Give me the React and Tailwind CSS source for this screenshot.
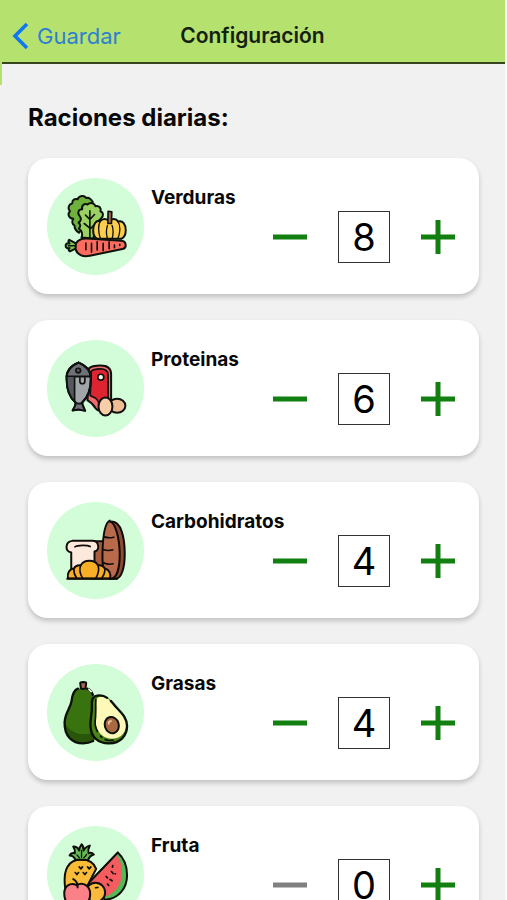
import { useState } from 'react';

const FONT = "font-[Inter,'Liberation_Sans',sans-serif]";

function Vegetables() {
  return (
    <svg viewBox="20 25 292 292" className="size-full" fill="none" stroke="#0c120c" strokeWidth="6" strokeLinecap="round" strokeLinejoin="round" aria-hidden="true">
      <path d="M116 190c-8-6-14-13-13-22-9-5-8-14-4-20-14-2-18-14-10-23-8-9-4-21 7-24-1-10 8-15 16-12 5-12 20-13 26-4 9-3 15 4 20 12l-20 24-14 60Z" fill="#6fb13d" />
      <path d="M124 204c5-13 1-20-8-27 6-6 5-12-1-18 8-4 9-12 3-20-8-10-3-20 8-20-3-11 6-19 16-14 9-9 22-4 24 5 11-3 18 6 15 15 10 4 9 14 3 20l-18 20-6 42Z" fill="#9bd062" />
      <path d="M149 124v82M149 150l-13-13M149 150l14-15M148 175l-16-13M150 178l15-14" strokeWidth="5" />
      <path d="M208 155c-8-9-22-9-28 0-14-5-21 12-21 28 0 12 5 22 13 25h72c8-4 13-14 13-26 0-17-9-31-23-26-6-10-20-10-26-1Z" fill="#fdcd4e" />
      <path d="M181 155c-8 10-7 33 0 53M233 155c9 12 8 35 0 53M202 168c-4 12-4 26 0 40M216 168c4 12 4 26 0 40" strokeWidth="4" />
      <path d="M203 162l1-37 11 2-1 35Z" fill="#a8694a" strokeWidth="5" />
      <path d="M107 222l-20-11c-4 4-3 8 1 11-7-2-12 1-12 7s5 9 12 7c-4 4-4 8 1 10l20-10Z" fill="#7fc650" />
      <path d="M84 229h20" strokeWidth="4" />
      <path d="M107 222c7-12 19-16 33-15l104 7c15 1 18 21 3 25l-98 20c-22 5-38-4-43-20Z" fill="#fb6b60" />
      <path d="M137 221v20M154 222v26M171 217v25M189 222v22M207 217v21M223 227v8M239 225v3" strokeWidth="5" />
    </svg>
  );
}

function Proteins() {
  return (
    <svg viewBox="20 21 292 292" className="size-full" fill="none" stroke="#101010" strokeWidth="6" strokeLinecap="round" strokeLinejoin="round" aria-hidden="true">
      <path d="M146 107c7-7 18-9 35-9 22 0 32 8 32 26v90c0 12-8 18-19 16-9 6-21 6-28-4-7-11-12-17-24-23Z" fill="#f36c6d" />
      <path d="M153 115c5-6 13-7 27-7 16 0 24 6 24 18v80c0 10-8 14-16 12-12-1-12-11-18-18-5-6-13-7-20-12Z" fill="#dc2530" strokeWidth="5" />
      <circle cx="182" cy="133" r="9" fill="#f4fff2" strokeWidth="5" />
      <path d="M115 89c-21 8-36 25-36 48 0 35 12 60 27 72 0 11-4 17-9 24l18-3 20 4c-4-8-8-15-9-25 17-15 26-42 26-71 0-25-16-40-37-49Z" fill="#a0a5aa" />
      <path d="M115 89c-21 8-36 25-36 42h73c-2-22-17-35-37-42Z" fill="#6e7276" />
      <path d="M79 134c1 34 10 58 24 70V134Z" fill="#55595d" stroke="none" />
      <path d="M103 132v76M119 135v11c0 9 15 9 15 0v-11M106 209c7 5 14 4 20 0" strokeWidth="5" />
      <path d="M106 213c0 7-4 13-9 20l18-3 20 4c-4-7-8-13-9-21Z" fill="#6e7276" strokeWidth="5" />
      <path d="M115 89c-21 8-36 25-36 48 0 35 12 60 27 72M126 209c17-15 26-42 26-71 0-25-16-40-37-49" />
      <circle cx="114" cy="113" r="7" fill="#55595d" strokeWidth="5" />
      <ellipse cx="231" cy="219" rx="25" ry="21" fill="#efbd95" />
      <ellipse cx="196" cy="221" rx="21" ry="27" fill="#f8cdaa" />
    </svg>
  );
}

function Carbs() {
  return (
    <svg viewBox="20 21 292 292" className="size-full" fill="none" stroke="#100c0a" strokeWidth="6" strokeLinecap="round" strokeLinejoin="round" aria-hidden="true">
      <path d="M98 139h92v112h-40Z" fill="#a85c40" />
      <path d="M215 80c28 0 39 48 39 97 0 43-10 72-25 75h-22Z" fill="#8d4b35" />
      <path d="M209 80c18 3 29 51 30 97 0 41-8 74-27 75-20-1-26-35-25-76 1-52 6-92 22-99Z" fill="#b86a4b" />
      <path d="M193 126c10 4 19 3 28 1M189 164c11 4 20 4 29 1M190 204c10 5 21 5 29 3" strokeWidth="5" />
      <path d="M96 138h60c22 0 24 29 7 32v78H93v-75c-20-3-19-32 3-35Z" fill="#fce9dc" />
      <path d="M104 156c8-6 38-6 46-1" strokeWidth="5" />
      <path d="M83 251c-3-16 5-29 18-30 5-9 12-10 20-9 11-18 41-19 53 0 9-2 16 2 20 9 12 2 19 14 16 30Z" fill="#f9ae28" />
      <path d="M121 212c-4 12 0 28 6 38M174 212c3 12-1 28-7 38M101 222c-1 10 3 21 8 28M194 222c1 10-4 21-9 28" strokeWidth="5" />
      <path d="M81 252h150" />
    </svg>
  );
}

function Avocado() {
  return (
    <svg viewBox="20 21 292 292" className="size-full" fill="none" stroke="#0b1009" strokeWidth="7" strokeLinecap="round" strokeLinejoin="round" aria-hidden="true">
      <path d="M113 95c-14 5-17 20-19 37-3 22-20 36-21 65-1 40 22 62 56 62 19 0 32-6 40-17l-10-128c-3-11-10-18-20-20Z" fill="#39730f" stroke="none" />
      <path d="M76 202c13 24 44 37 82 27l10 13c-14 18-56 22-76 2-10-10-16-24-16-42Z" fill="#285509" stroke="none" />
      <path d="M158 114c-3-10-9-16-17-19M113 95c-14 5-17 20-19 37-3 22-20 36-21 65-1 40 22 63 56 63 12 0 22-3 30-7" />
      <path d="M146 97l7 7" stroke="#effff0" strokeWidth="5" />
      <path d="M122 94l-2-15c0-5 18-5 18 0l-2 15c-3 3-11 3-14 0Z" fill="#a86654" strokeWidth="6" />
      <path d="M174 116c-15 1-20 11-19 28 2 25-6 41-4 66 2 32 24 51 57 50 32-1 53-22 53-52 0-32-25-45-41-68-11-16-23-24-46-24Z" fill="#4a8519" stroke="none" />
      <path d="M178 120c-11 2-11 14-10 31 1 26-6 39 1 60 8 23 26 36 49 35 24-1 40-18 40-41 0-25-22-39-37-60-12-17-24-27-43-25Z" fill="#fff9b9" stroke="none" />
      <path d="M201 123c-9-7-19-9-30-7-14 2-17 12-16 28 2 25-6 41-4 66 2 32 24 51 57 50 32-1 53-22 53-52 0-31-25-45-42-68l-7-8" />
      <path d="M167 128c-1 24 1 44-2 64-1 14 2 24 7 32M181 238l4 4M195 248c8 4 16 4 24 2" strokeWidth="5" />
      <ellipse cx="215" cy="205" rx="21" ry="25" transform="rotate(-18 215 205)" fill="#a86840" strokeWidth="6" />
      <path d="M213 193c-6 0-8 3-7 8" stroke="#f0cba8" strokeWidth="5" />
    </svg>
  );
}

function Fruit() {
  return (
    <svg viewBox="20 71 292 292" className="size-full" fill="none" stroke="#100e0a" strokeWidth="6" strokeLinecap="round" strokeLinejoin="round" aria-hidden="true">
      <path d="M233 151c20 18 28 45 28 68 0 42-28 72-66 74l-50-50Z" fill="#52b957" />
      <path d="M230 158c11 17 17 36 16 56-2 38-24 62-52 70l-45-41Z" fill="#f45c60" stroke="none" />
      <path d="M233 151l-88 92" />
      <path d="M218 190l-1 5M214 208l5 6M225 215l1 0M210 232l6 4M202 246l4 4M198 223l4 4" strokeWidth="5" />
      <path d="M75 260c-8-58 9-88 48-88 24 0 38 9 45 28l-24 46-19 80H88Z" fill="#f9bc38" />
      <path d="M105 172c-4-9-10-12-17-12 3-6 9-9 16-7 1-9-1-15-5-20 9 0 15 4 18 12 0-8 3-14 7-19 5 5 7 11 6 19 4-8 10-13 19-15-4 7-6 15-4 23 6-3 12-1 16 4-8 2-14 7-17 16Z" fill="#64b955" />
      <path d="M124 145v20M110 158l8 9M139 157l-8 10" strokeWidth="4" />
      <path d="M117 194l5 6 5-6M142 194l5 6 5-6M105 211l5 6 5-6M129 211l5 6 5-6" strokeWidth="5" />
      <circle cx="166" cy="271" r="29" fill="#fbb93e" />
      <path d="M166 257l7-1" strokeWidth="5" />
      <path d="M109 249c-19-10-38 3-37 27 1 26 17 42 37 34 22 9 41-9 41-34s-21-38-41-27Z" fill="#fb8189" />
      <path d="M112 256c1-12-4-20-13-25" />
    </svg>
  );
}

const GROUPS = [
  { id: 'verduras', name: 'Verduras', servings: 8, Icon: Vegetables },
  { id: 'proteinas', name: 'Proteinas', servings: 6, Icon: Proteins },
  { id: 'carbohidratos', name: 'Carbohidratos', servings: 4, Icon: Carbs },
  { id: 'grasas', name: 'Grasas', servings: 4, Icon: Avocado },
  { id: 'fruta', name: 'Fruta', servings: 0, Icon: Fruit },
];

function ServingCard({ id, name, servings, Icon }) {
  const [count, setCount] = useState(servings);
  return (
    <li className="flex h-[136px] gap-[7px] rounded-[20px] bg-white pt-5 pr-6 pl-[19px] shadow-[0_3px_5px_rgba(0,0,0,0.2)]">
      <div className="size-[97px] shrink-0 rounded-full bg-[#d2fdd8]">
        <Icon />
      </div>
      <div className="flex grow flex-col">
        <label htmlFor={id} className="text-[19px] leading-10 font-bold text-[#080808]">{name}</label>
        <div className="-mt-[7px] flex items-center justify-end gap-[31px]">
          <button
            type="button"
            aria-label={`Quitar una ración de ${name}`}
            disabled={count === 0}
            onClick={() => setCount(count - 1)}
            className="text-[#118011] disabled:text-[#808080]"
          >
            <svg viewBox="0 0 34 34" className="size-[34px]" aria-hidden="true">
              <path d="M0 17h34" stroke="currentColor" strokeWidth="5" />
            </svg>
          </button>
          <input
            id={id}
            type="text"
            inputMode="numeric"
            value={count}
            onChange={(e) => setCount(Number(e.target.value.replace(/\D/g, '')))}
            className="size-[52px] border border-[#333] bg-white text-center text-[38px] leading-[50px] text-black outline-none"
          />
          <button
            type="button"
            aria-label={`Añadir una ración de ${name}`}
            onClick={() => setCount(count + 1)}
            className="text-[#118011]"
          >
            <svg viewBox="0 0 34 34" className="size-[34px]" aria-hidden="true">
              <path d="M0 17h34M17 0v34" stroke="currentColor" strokeWidth="5" />
            </svg>
          </button>
        </div>
      </div>
    </li>
  );
}

export default function App() {
  return (
    <div className={`relative flex h-screen flex-col overflow-hidden border-r-2 border-[#fafafa] bg-[#f1f1f1] ${FONT}`}>
      <header className="grid h-[62px] shrink-0 grid-cols-[1fr_auto_1fr] items-center bg-[#b5e26f] px-3 pt-[10px]">
        <a href="#guardar" className="flex items-center gap-2 text-[22px] leading-7 text-[#2f80cf]">
          <svg viewBox="0 0 17 28" className="h-7 w-[17px]" fill="none" stroke="#0f77f3" strokeWidth="3.6" aria-hidden="true">
            <path d="M15 2L3 14l12 12" />
          </svg>
          Guardar
        </a>
        <h1 className="text-[21px] leading-7 font-semibold text-[#142010]">Configuración</h1>
      </header>
      <div className="ml-[2px] h-[2px] shrink-0 bg-[#38461f]" />
      <div className="absolute top-[62px] left-0 h-[23px] w-[2px] bg-[#b5e26f]" />
      <main className="min-h-0 grow pt-9 pr-[26px] pl-7">
        <h2 className="text-[24px] leading-9 font-bold text-[#080808]">Raciones diarias:</h2>
        <ul className="mt-[22px] flex flex-col gap-[26px]">
          {GROUPS.map((group) => (
            <ServingCard key={group.id} {...group} />
          ))}
        </ul>
      </main>
    </div>
  );
}
